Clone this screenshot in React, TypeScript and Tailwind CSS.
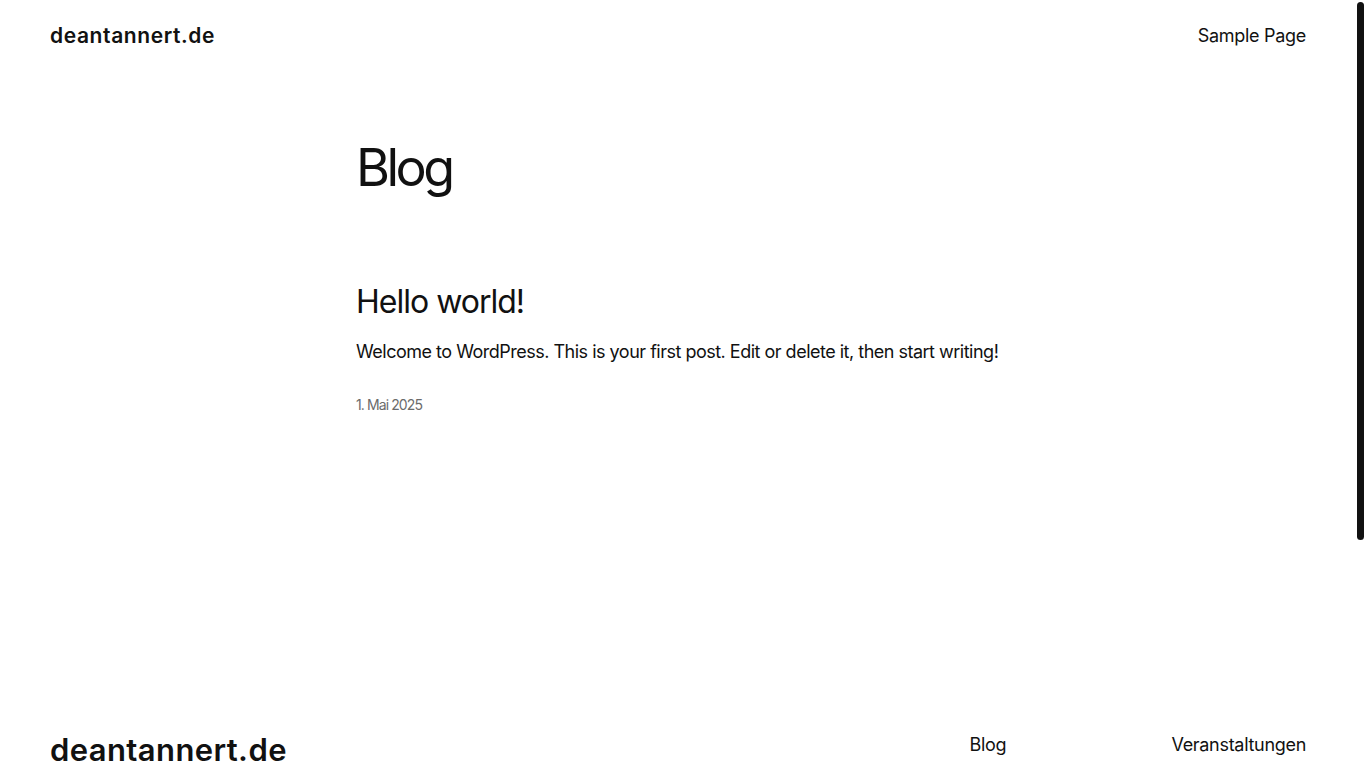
const font = "font-['Inter','Noto_Sans',sans-serif]";

const NavLink = ({ label }: { label: string }) => (
  <a href="#" className="text-[18px] leading-none text-[#111111] tracking-[-0.3px]">
    {label}
  </a>
);

export default function App() {
  return (
    <div className={`${font} relative min-h-screen bg-white text-[#111111]`}>
      {/* overlay scrollbar thumb */}
      <div className="fixed right-[2px] top-[2px] w-[7px] h-[538px] rounded-full bg-[#111111]" />

      <header className="flex items-center justify-between pl-[50px] pr-[60px] h-[72px]">
        <a href="#" className="text-[21px] font-semibold tracking-[0.6px]">
          deantannert.de
        </a>
        <nav>
          <NavLink label="Sample Page" />
        </nav>
      </header>

      <main className="pl-[356px] pr-[60px]">
        <h1 className="mt-[66px] text-[52px] leading-[60px] font-normal tracking-[-3.5px]">Blog</h1>

        <article className="mt-[84px]">
          <h2 className="text-[32px] leading-[40px] font-normal tracking-[-1px]">
            <a href="#">Hello world!</a>
          </h2>
          <p className="mt-[16px] text-[18px] leading-[28px] tracking-[-0.5px]">
            Welcome to WordPress. This is your first post. Edit or delete it, then start writing!
          </p>
          <p className="mt-[29px] text-[14px] leading-[20px] text-[#6b6b6b] tracking-[-0.9px]">
            1. Mai 2025
          </p>
        </article>
      </main>

      <footer className="mt-[321px] pl-[50px] pr-[60px] pb-[300px]">
        <div className="flex items-start justify-between">
          <a href="#" className="text-[31px] leading-[40px] font-semibold tracking-[0.4px] mt-[-6px]">
            deantannert.de
          </a>
          <div className="flex">
            <nav className="w-[202px] flex flex-col gap-4">
              <NavLink label="Blog" />
            </nav>
            <nav className="flex flex-col gap-4 items-end">
              <NavLink label="Veranstaltungen" />
            </nav>
          </div>
        </div>
      </footer>
    </div>
  );
}
